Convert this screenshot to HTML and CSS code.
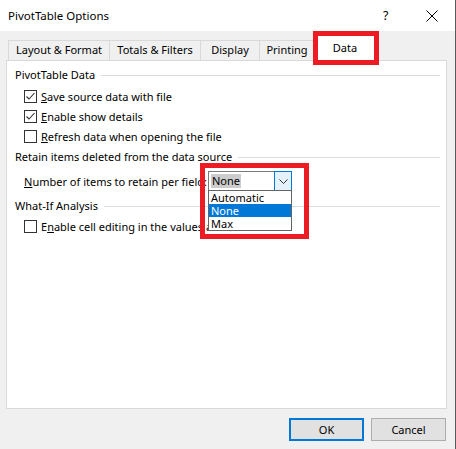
FILE: index.html
```html
<!DOCTYPE html>
<html>
<head>
<meta charset="utf-8">
<link rel="stylesheet" href="styles.css">
</head>
<body>
<div class="window">
  <div class="titlebar">
    <span class="title">PivotTable Options</span>
    <span class="help">?</span>
    <span class="close"><svg width="12" height="12" viewBox="0 0 12 12"><path d="M0.5 0.5 L11.5 11.5 M11.5 0.5 L0.5 11.5" stroke="#000" stroke-width="1" fill="none"/></svg></span>
  </div>
  <div class="tabs">
    <div class="tab t1">Layout &amp; Format</div>
    <div class="tab t2">Totals &amp; Filters</div>
    <div class="tab t3">Display</div>
    <div class="tab t4">Printing</div>
    <div class="tab active">Data</div>
  </div>
  <div class="panel">
    <div class="group-title">PivotTable Data</div>
    <div class="checks">
      <div class="check"><span class="box"><svg width="11" height="11" viewBox="0 0 11 11"><path d="M1.5 5.5 L4 8 L9.5 2" stroke="#333" stroke-width="1.1" fill="none"/></svg></span><span><u>S</u>ave source data with file</span></div>
      <div class="check"><span class="box"><svg width="11" height="11" viewBox="0 0 11 11"><path d="M1.5 5.5 L4 8 L9.5 2" stroke="#333" stroke-width="1.1" fill="none"/></svg></span><span><u>E</u>nable show details</span></div>
      <div class="check"><span class="box"></span><span><u>R</u>efresh data when opening the file</span></div>
    </div>
    <div class="group-title g2">Retain items deleted from the data source</div>
    <div class="field-row">
      <span class="field-label"><u>N</u>umber of items to retain per field:</span>
      <div class="combo">
        <span class="combo-value"><span class="sel">None</span></span>
        <span class="combo-btn"><svg width="9" height="5" viewBox="0 0 9 5"><path d="M0.5 0.5 L4.5 4.5 L8.5 0.5" stroke="#333" stroke-width="1" fill="none"/></svg></span>
        <div class="combo-list">
          <div class="opt">Automatic</div>
          <div class="opt on">None</div>
          <div class="opt">Max</div>
        </div>
      </div>
    </div>
    <div class="group-title g3">What-If Analysis</div>
    <div class="check single"><span class="box"></span><span>E<u>n</u>able cell editing in the values area</span></div>
  </div>
  <div class="buttons">
    <div class="btn default">OK</div>
    <div class="btn">Cancel</div>
  </div>
  <div class="annot annot-tab"></div>
  <div class="annot annot-combo"></div>
</div>
</body>
</html>
```

FILE: styles.css
```css
html, body {
  margin: 0;
  padding: 0;
}
body {
  width: 456px;
  height: 449px;
  overflow: hidden;
  background: #f0f0f0;
  font-family: "Noto Sans", "Open Sans", sans-serif;
  font-size: 11px;
  color: #000;
}
.window {
  position: relative;
  width: 455px;
  height: 449px;
  border-right: 1px solid #5a5a5a;
  background: #f0f0f0;
}
.titlebar {
  height: 31px;
  background: #fff;
  display: flex;
  align-items: center;
  padding-left: 8px;
}
.title {
  font-size: 11.5px;
  flex: 1;
}
.help {
  width: 10px;
  font-size: 12.5px;
  margin-right: 33px;
}
.close {
  display: flex;
  margin-right: 17px;
}
.tabs {
  height: 29px;
  display: flex;
  align-items: flex-end;
  padding-left: 8px;
  position: relative;
  z-index: 2;
}
.tab {
  box-sizing: border-box;
  height: 20px;
  line-height: 18px;
  border: 1px solid #d9d9d9;
  border-bottom: none;
  text-align: center;
  margin-right: -1px;
  white-space: nowrap;
}
.t1 { width: 102px; }
.t2 { width: 92px; }
.t3 { width: 60px; }
.t4 { width: 56px; }
.tab.active {
  width: 60px;
  height: 26px;
  line-height: 24px;
  background: #fff;
  margin-left: 1px;
  margin-bottom: -1px;
}
.panel {
  box-sizing: border-box;
  margin: 0 8px 0 6px;
  height: 349px;
  background: #fff;
  border: 1px solid #d9d9d9;
  padding: 6px 6px 0 8px;
  position: relative;
  z-index: 1;
}
.group-title {
  display: flex;
  align-items: center;
  height: 16px;
  line-height: 16px;
  white-space: nowrap;
}
.group-title::after {
  content: "";
  flex: 1;
  border-top: 1px solid #dcdcdc;
  margin-left: 6px;
}
.g2 { margin-top: 3px; }
.g3 { margin-top: 7px; }
.checks {
  margin-top: 3px;
}
.check {
  display: flex;
  align-items: center;
  height: 20px;
  padding-left: 9px;
  white-space: nowrap;
}
.check.single {
  margin-top: 2px;
}
.box {
  box-sizing: border-box;
  width: 13px;
  height: 13px;
  border: 1px solid #333;
  background: #fff;
  margin-right: 4px;
  display: flex;
  align-items: center;
  justify-content: center;
}
.field-row {
  margin-top: 6px;
  display: flex;
  align-items: center;
  height: 20px;
  padding-left: 9px;
}
.field-label {
  width: 184px;
  white-space: nowrap;
  overflow: hidden;
}
.combo {
  position: relative;
  box-sizing: border-box;
  width: 84px;
  height: 20px;
  border: 1px solid #7a7a7a;
  background: #fff;
  display: flex;
}
.combo-value {
  flex: 1;
  display: flex;
  align-items: center;
  padding-left: 2px;
}
.sel {
  background: #cccccc;
  line-height: 14px;
  padding: 0 1px;
}
.combo-btn {
  box-sizing: border-box;
  width: 18px;
  margin: -1px -1px -1px 0;
  border: 1px solid #0078d7;
  background: #e5f1fb;
  display: flex;
  align-items: center;
  justify-content: center;
}
.combo-list {
  position: absolute;
  left: -1px;
  top: 18px;
  box-sizing: border-box;
  width: 84px;
  border: 1px solid #646464;
  background: #fff;
  z-index: 3;
}
.opt {
  height: 13px;
  line-height: 13px;
  padding-left: 2px;
}
.opt.on {
  background: #0078d7;
  color: #fff;
}
.buttons {
  margin-top: 9px;
  display: flex;
  justify-content: flex-end;
  gap: 7px;
  padding-right: 9px;
}
.btn {
  box-sizing: border-box;
  width: 75px;
  height: 23px;
  line-height: 21px;
  text-align: center;
  background: #e1e1e1;
  border: 1px solid #adadad;
}
.btn.default {
  border: 2px solid #0078d7;
  line-height: 19px;
}
.annot {
  position: absolute;
  box-sizing: border-box;
  border: 5px solid #ed1c24;
  z-index: 5;
}
.annot-tab {
  left: 313px;
  top: 31px;
  width: 66px;
  height: 34px;
}
.annot-combo {
  left: 200px;
  top: 163px;
  width: 109px;
  height: 76px;
}
```
